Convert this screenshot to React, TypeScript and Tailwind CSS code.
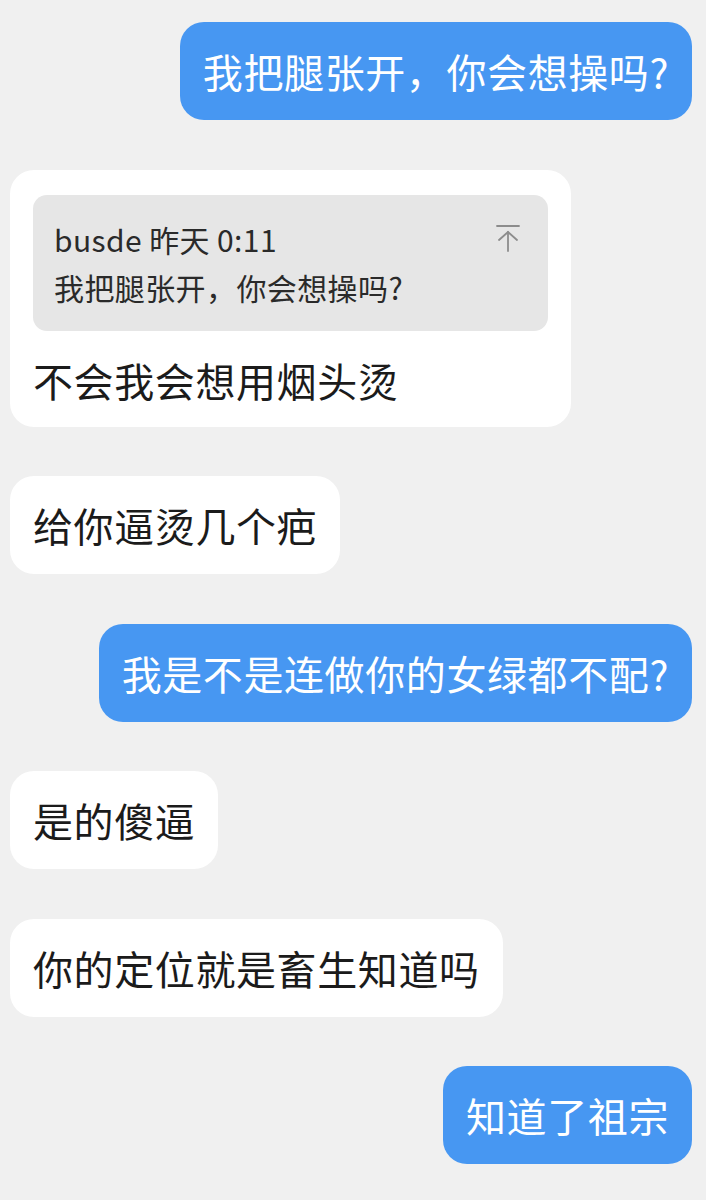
import React from 'react';

const FONT = { fontFamily: '"Noto Sans CJK SC", "Noto Sans", sans-serif' };

type Msg = { from: 'me' | 'them'; text: string; quote?: { author: string; time: string; text: string } };

const messages: Msg[] = [
  { from: 'me', text: '我把腿张开，你会想操吗?' },
  {
    from: 'them',
    text: '不会我会想用烟头烫',
    quote: { author: 'busde', time: '昨天 0:11', text: '我把腿张开，你会想操吗?' },
  },
  { from: 'them', text: '给你逼烫几个疤' },
  { from: 'me', text: '我是不是连做你的女绿都不配?' },
  { from: 'them', text: '是的傻逼' },
  { from: 'them', text: '你的定位就是畜生知道吗' },
  { from: 'me', text: '知道了祖宗' },
];

function JumpIcon() {
  // arrow pointing up to a bar
  return (
    <svg width="28" height="30" viewBox="0 0 28 30" fill="none" stroke="#8c8c8c" strokeWidth="1.8" strokeLinecap="round">
      <line x1="3" y1="3" x2="25" y2="3" />
      <line x1="14" y1="9" x2="14" y2="28" />
      <polyline points="5,17 14,9 23,17" />
    </svg>
  );
}

function Bubble({ msg }: { msg: Msg }) {
  const mine = msg.from === 'me';
  let cls = 'rounded-[24px] px-[23px] ';
  if (mine) cls += 'bg-[#4797f2] text-white py-[21px]';
  else if (msg.quote) cls += 'bg-white text-[#1b1b1b] pt-[25px] pb-[19px]';
  else cls += 'bg-white text-[#1b1b1b] py-[21px]';

  return (
    <div className={mine ? 'flex justify-end pr-[14px]' : 'flex justify-start pl-[10px]'}>
      <div className={cls}>
        {msg.quote && (
          <div className="mb-[21px] flex w-[515px] items-start justify-between rounded-[14px] bg-[#e6e6e6] pl-[21px] pr-[26px] py-[20px] text-[#2a2a2a]">
            <div className="text-[30px] leading-[48px] tracking-[0.4px]">
              <div>
                {msg.quote.author} {msg.quote.time}
              </div>
              <div>{msg.quote.text}</div>
            </div>
            <div className="pt-[8px]">
              <JumpIcon />
            </div>
          </div>
        )}
        <div className="text-[40px] leading-[56px] tracking-[0.6px] whitespace-nowrap">{msg.text}</div>
      </div>
    </div>
  );
}

export default function App() {
  return (
    <div className="min-h-[1200px] w-[706px] bg-[#f0f0f0] pt-[22px] pb-[37px]" style={FONT}>
      <div className="flex flex-col gap-[49.5px]">
        {messages.map((m, i) => (
          <Bubble key={i} msg={m} />
        ))}
      </div>
    </div>
  );
}
